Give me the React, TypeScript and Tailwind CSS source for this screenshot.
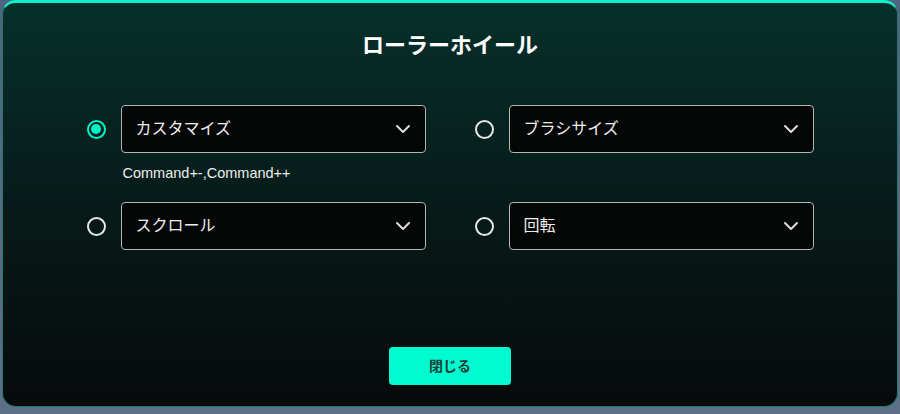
import * as React from "react";
import { ChevronDown } from "lucide-react";

const font = { fontFamily: '"Liberation Sans", "Noto Sans CJK JP", sans-serif' };

function Radio({ checked }: { checked?: boolean }) {
  return (
    <div className={`grid h-[19px] w-[19px] shrink-0 place-items-center rounded-full border-2 ${checked ? "border-[#00f0c8]" : "border-[#e6e6e6]"}`}>
      {checked && <div className="h-[10px] w-[10px] rounded-full bg-[#00f0c8]" />}
    </div>
  );
}

function Option({ label, checked }: { label: string; checked?: boolean }) {
  return (
    <div className="flex items-center gap-[15px]">
      <Radio checked={checked} />
      <button className="flex h-[48px] flex-1 items-center justify-between rounded-[4px] border border-[#b4b4b4] bg-[#050606] pl-[14px] pr-[10px] text-left">
        <span className="text-[16px] text-[#eeeeee]">{label}</span>
        <ChevronDown size={24} strokeWidth={2} className="text-[#dddddd]" />
      </button>
    </div>
  );
}

export default function App() {
  return (
    <div className="h-[414px] w-[900px] overflow-hidden bg-gradient-to-b from-[#4f6382] to-[#5d7088] px-[2px]" style={font}>
      <div className="flex h-[407px] flex-col rounded-[14px] border-x border-b border-t-[3px] border-x-[#1d7a66] border-b-[#1d7a66] border-t-[#0ff0c4] bg-gradient-to-b from-[#07302b] via-[#061b19] to-[#070a0b]">
        {/* title */}
        <h1 className="pt-[27px] text-center text-[22px] leading-[32px] font-bold text-white">ローラーホイール</h1>

        {/* options */}
        <div className="mx-auto mt-[43px] grid w-[727px] grid-cols-2 gap-x-[49px] gap-y-[19px]">
          <div>
            <Option label="カスタマイズ" checked />
            <div className="mt-[10px] pl-[36px] text-[14.5px] leading-[20px] text-[#ececec]">Command+-,Command++</div>
          </div>
          <div>
            <Option label="ブラシサイズ" />
          </div>
          <Option label="スクロール" />
          <Option label="回転" />
        </div>

        <div className="flex-1" />

        {/* footer */}
        <div className="mb-[21px] flex justify-center">
          <button className="h-[38px] w-[122px] rounded-[4px] bg-[#00fbd0] text-[14px] font-bold text-[#1d3d38]">閉じる</button>
        </div>
      </div>
    </div>
  );
}
